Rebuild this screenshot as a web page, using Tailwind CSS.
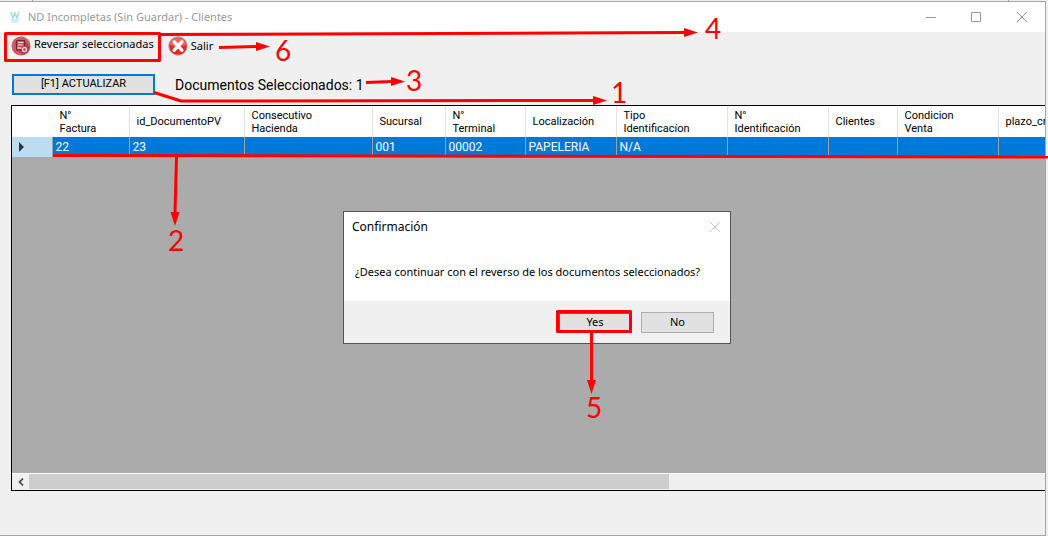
<!DOCTYPE html>
<html lang="es">
<head>
    <meta charset="UTF-8">
    <meta name="viewport" content="width=device-width, initial-scale=1.0">
    <title>ND Incompletas (Sin Guardar) - Clientes</title>
    <script src="https://cdn.jsdelivr.net/npm/@tailwindcss/browser@4"></script>
</head>
<body class="bg-[#f0f0f0] font-['Noto_Sans',sans-serif] text-[11px] text-black">
    <div class="relative flex h-screen flex-col overflow-hidden pr-[2px]">
        <!-- edge of the window behind -->
        <div class="flex h-px shrink-0 justify-between pr-[37px] pl-8">
            <span class="w-px bg-[#a0a0a0]"></span>
            <span class="w-px bg-[#a0a0a0]"></span>
        </div>

        <!-- main window -->
        <div class="flex min-h-0 grow flex-col border-y border-r border-[#a6a6a6]">
            <header class="flex h-[30px] shrink-0 items-center bg-white pl-2 text-[#999]">
                <svg class="mr-1 h-4 w-4" viewBox="0 0 16 16" fill="none">
                    <path d="M3 3l2 6 2-5 2 5 2-6" stroke="#9fdde2" stroke-width="1.5"/>
                    <path d="M3 11h8M4 13h6" stroke="#d3eff1" stroke-width="2"/>
                </svg>
                <h1 class="grow">ND Incompletas (Sin Guardar) - Clientes</h1>
                <button type="button" aria-label="Minimizar" class="flex h-full w-[45px] items-center justify-center">
                    <svg class="h-[10px] w-[10px]" viewBox="0 0 10 10"><path d="M0 5.500h10" stroke="#999"/></svg>
                </button>
                <button type="button" aria-label="Maximizar" class="flex h-full w-[46px] items-center justify-center">
                    <svg class="h-[10px] w-[10px]" viewBox="0 0 10 10"><path d="M.5.5h9v9h-9z" fill="none" stroke="#999"/></svg>
                </button>
                <button type="button" aria-label="Cerrar" class="flex h-full w-[46px] items-center justify-center">
                    <svg class="h-[10px] w-[10px]" viewBox="0 0 10 10"><path d="M0 0l10 10M10 0L0 10" stroke="#999"/></svg>
                </button>
            </header>

            <!-- toolbar -->
            <div class="flex h-7 shrink-0 items-center gap-[14px] pl-[11px]">
                <button type="button" class="flex items-center gap-[3px]">
                    <svg class="h-5 w-5" viewBox="0 0 20 20">
                        <path fill="#f7f3f3" d="M0 0h20v20H0z"/>
                        <circle cx="10" cy="10" r="9.500" fill="#cf5a60"/>
                        <path d="M14 5l5 6a9.500 9.500 0 01-7 8l-6-5z" fill="#b3434b"/>
                        <path d="M6 4.500h7.500v6M5.500 4.500v9.500h5" fill="none" stroke="#6b2a30" stroke-width="1.200"/>
                        <path d="M7 6.500h5.500M7 9h5.500" stroke="#f3d5d6" stroke-width="1"/>
                        <path d="M6.500 12h4" stroke="#f3d5d6" stroke-width="1.500"/>
                        <circle cx="13.500" cy="13.500" r="2" fill="none" stroke="#f3d5d6" stroke-width="1.300"/>
                    </svg>
                    <span class="pb-1">Reversar seleccionadas</span>
                </button>
                <button type="button" class="flex items-center gap-[3px]">
                    <svg class="h-5 w-5" viewBox="0 0 20 20">
                        <circle cx="10" cy="10" r="9.300" fill="#e8251f" stroke="#b9b9b9"/>
                        <path d="M2 9a8 8 0 0116 0q-8 3-16 0z" fill="#f4635a"/>
                        <path d="M6.200 5.800l7.600 8.400M13.800 5.800l-7.600 8.400" stroke="#fff" stroke-width="3.500" stroke-linecap="round"/>
                    </svg>
                    <span>Salir</span>
                </button>
            </div>

            <div class="flex shrink-0 items-center gap-5 pt-[14px] pb-[10px] pl-3 font-['Roboto',sans-serif]">
                <button type="button" class="h-[21px] w-[143px] border-2 border-[#0078d7] bg-[#e1e1e1]">[F1] ACTUALIZAR</button>
                <p class="text-sm leading-5">Documentos Seleccionados: 1</p>
            </div>

            <!-- data grid -->
            <div class="mb-[44px] ml-[11px] flex min-h-0 grow flex-col border-y border-l border-black bg-[#ababab]">
                <div class="min-h-0 grow overflow-hidden">
                    <table class="w-[1105px] table-fixed border-collapse text-left font-['Roboto',sans-serif] leading-[13px]">
                        <colgroup>
                            <col class="w-[40px]"><col class="w-[77px]"><col class="w-[115px]"><col class="w-[128px]"><col class="w-[73px]"><col class="w-[80px]">
                            <col class="w-[91px]"><col class="w-[111px]"><col class="w-[101px]"><col class="w-[69px]"><col class="w-[101px]"><col class="w-[119px]">
                        </colgroup>
                        <thead>
                            <tr class="h-[31px] bg-white *:border-r *:border-[#e5e5e5] *:p-0 *:pl-[7px] *:font-normal">
                                <th class="border-white!"></th>
                                <th>N°<br>Factura</th>
                                <th>id_DocumentoPV</th>
                                <th>Consecutivo<br>Hacienda</th>
                                <th>Sucursal</th>
                                <th>N°<br>Terminal</th>
                                <th>Localización</th>
                                <th>Tipo<br>Identificacíon</th>
                                <th>N°<br>Identificación</th>
                                <th>Clientes</th>
                                <th>Condicion<br>Venta</th>
                                <th>plazo_cr</th>
                            </tr>
                        </thead>
                        <tbody>
                            <tr class="h-5 bg-[#0078d7] text-xs text-white *:border-r *:border-[#a0a0a0] *:p-0 *:pl-[3px]">
                                <td class="bg-[#bcdcf4]">
                                    <svg class="ml-1 h-[10px] w-[6px]" viewBox="0 0 6 10"><path d="M0 0l5 5-5 5z" fill="#333"/></svg>
                                </td>
                                <td>22</td>
                                <td>23</td>
                                <td></td>
                                <td>001</td>
                                <td>00002</td>
                                <td>PAPELERIA</td>
                                <td>N/A</td>
                                <td></td>
                                <td></td>
                                <td></td>
                                <td></td>
                            </tr>
                        </tbody>
                    </table>
                </div>
                <!-- horizontal scrollbar -->
                <div class="flex h-[17px] shrink-0 border-y border-t-white border-b-[#f0f0f0] bg-[#f0f0f0]">
                    <button type="button" aria-label="Desplazar a la izquierda" class="flex w-[17px] items-center justify-center">
                        <svg class="h-2 w-[6px]" viewBox="0 0 6 8"><path d="M5 .5L1.500 4 5 7.500" fill="none" stroke="#555" stroke-width="1.800"/></svg>
                    </button>
                    <div class="w-[62%] bg-[#cdcdcd]"></div>
                </div>
            </div>
        </div>

        <!-- confirmation dialog -->
        <div role="dialog" aria-labelledby="dlgTitle" class="absolute top-[211px] left-[343px] flex w-[388px] flex-col border border-[#555] bg-white">
            <div class="flex h-[30px] items-center justify-between pr-[10px] pl-2">
                <h2 id="dlgTitle" class="text-xs">Confirmación</h2>
                <button type="button" aria-label="Cerrar">
                    <svg class="h-[10px] w-[10px]" viewBox="0 0 10 10"><path d="M0 0l10 10M10 0L0 10" stroke="#c4c4c4"/></svg>
                </button>
            </div>
            <p class="px-[11px] pt-[22px] pb-[21px] leading-4">¿Desea continuar con el reverso de los documentos seleccionados?</p>
            <div class="flex h-[42px] items-center justify-end gap-[9px] bg-[#f0f0f0] pr-4">
                <button type="button" class="h-[21px] w-[74px] border-2 border-[#0078d7] bg-[#e1e1e1]">Yes</button>
                <button type="button" class="h-[21px] w-[73px] border border-[#adadad] bg-[#e1e1e1]">No</button>
            </div>
        </div>

        <!-- numbered callouts -->
        <svg class="pointer-events-none absolute top-0 left-0 h-[536px] w-[1048px] font-['Lato',sans-serif] text-[28px]" viewBox="0 0 1048 536">
            <g fill="none" stroke="#f00" stroke-width="3" stroke-linejoin="round">
                <path d="M5.500 33.500h154v27h-154z"/>
                <path d="M557.500 311.500h73v20h-73z"/>
                <path d="M160 34.500L686 32.500"/>
                <path d="M154 92.500L181 101L594 100.500"/>
                <path d="M53 155.500L1048 157"/>
                <path d="M176.500 157L175 213"/>
                <path d="M591.500 333V381"/>
                <path d="M219 47.500L257 46.500"/>
                <path d="M366 82.500L392 81.500"/>
            </g>
            <g fill="#f00">
                <path d="M684 28l14 4.500-14 4.500z"/>
                <path d="M593 96l14 4.500-14 4.500z"/>
                <path d="M170.500 212h9l-4.500 14z"/>
                <path d="M587 380h9l-4.500 14z"/>
                <path d="M256 42l14 4.500-14 4.500z"/>
                <path d="M391 77l14 4.500-14 4.500z"/>
                <text x="611" y="103">1</text>
                <text x="168" y="251">2</text>
                <text x="406" y="91">3</text>
                <text x="705" y="39">4</text>
                <text x="586" y="418">5</text>
                <text x="275" y="61">6</text>
            </g>
        </svg>
    </div>
</body>
</html>
